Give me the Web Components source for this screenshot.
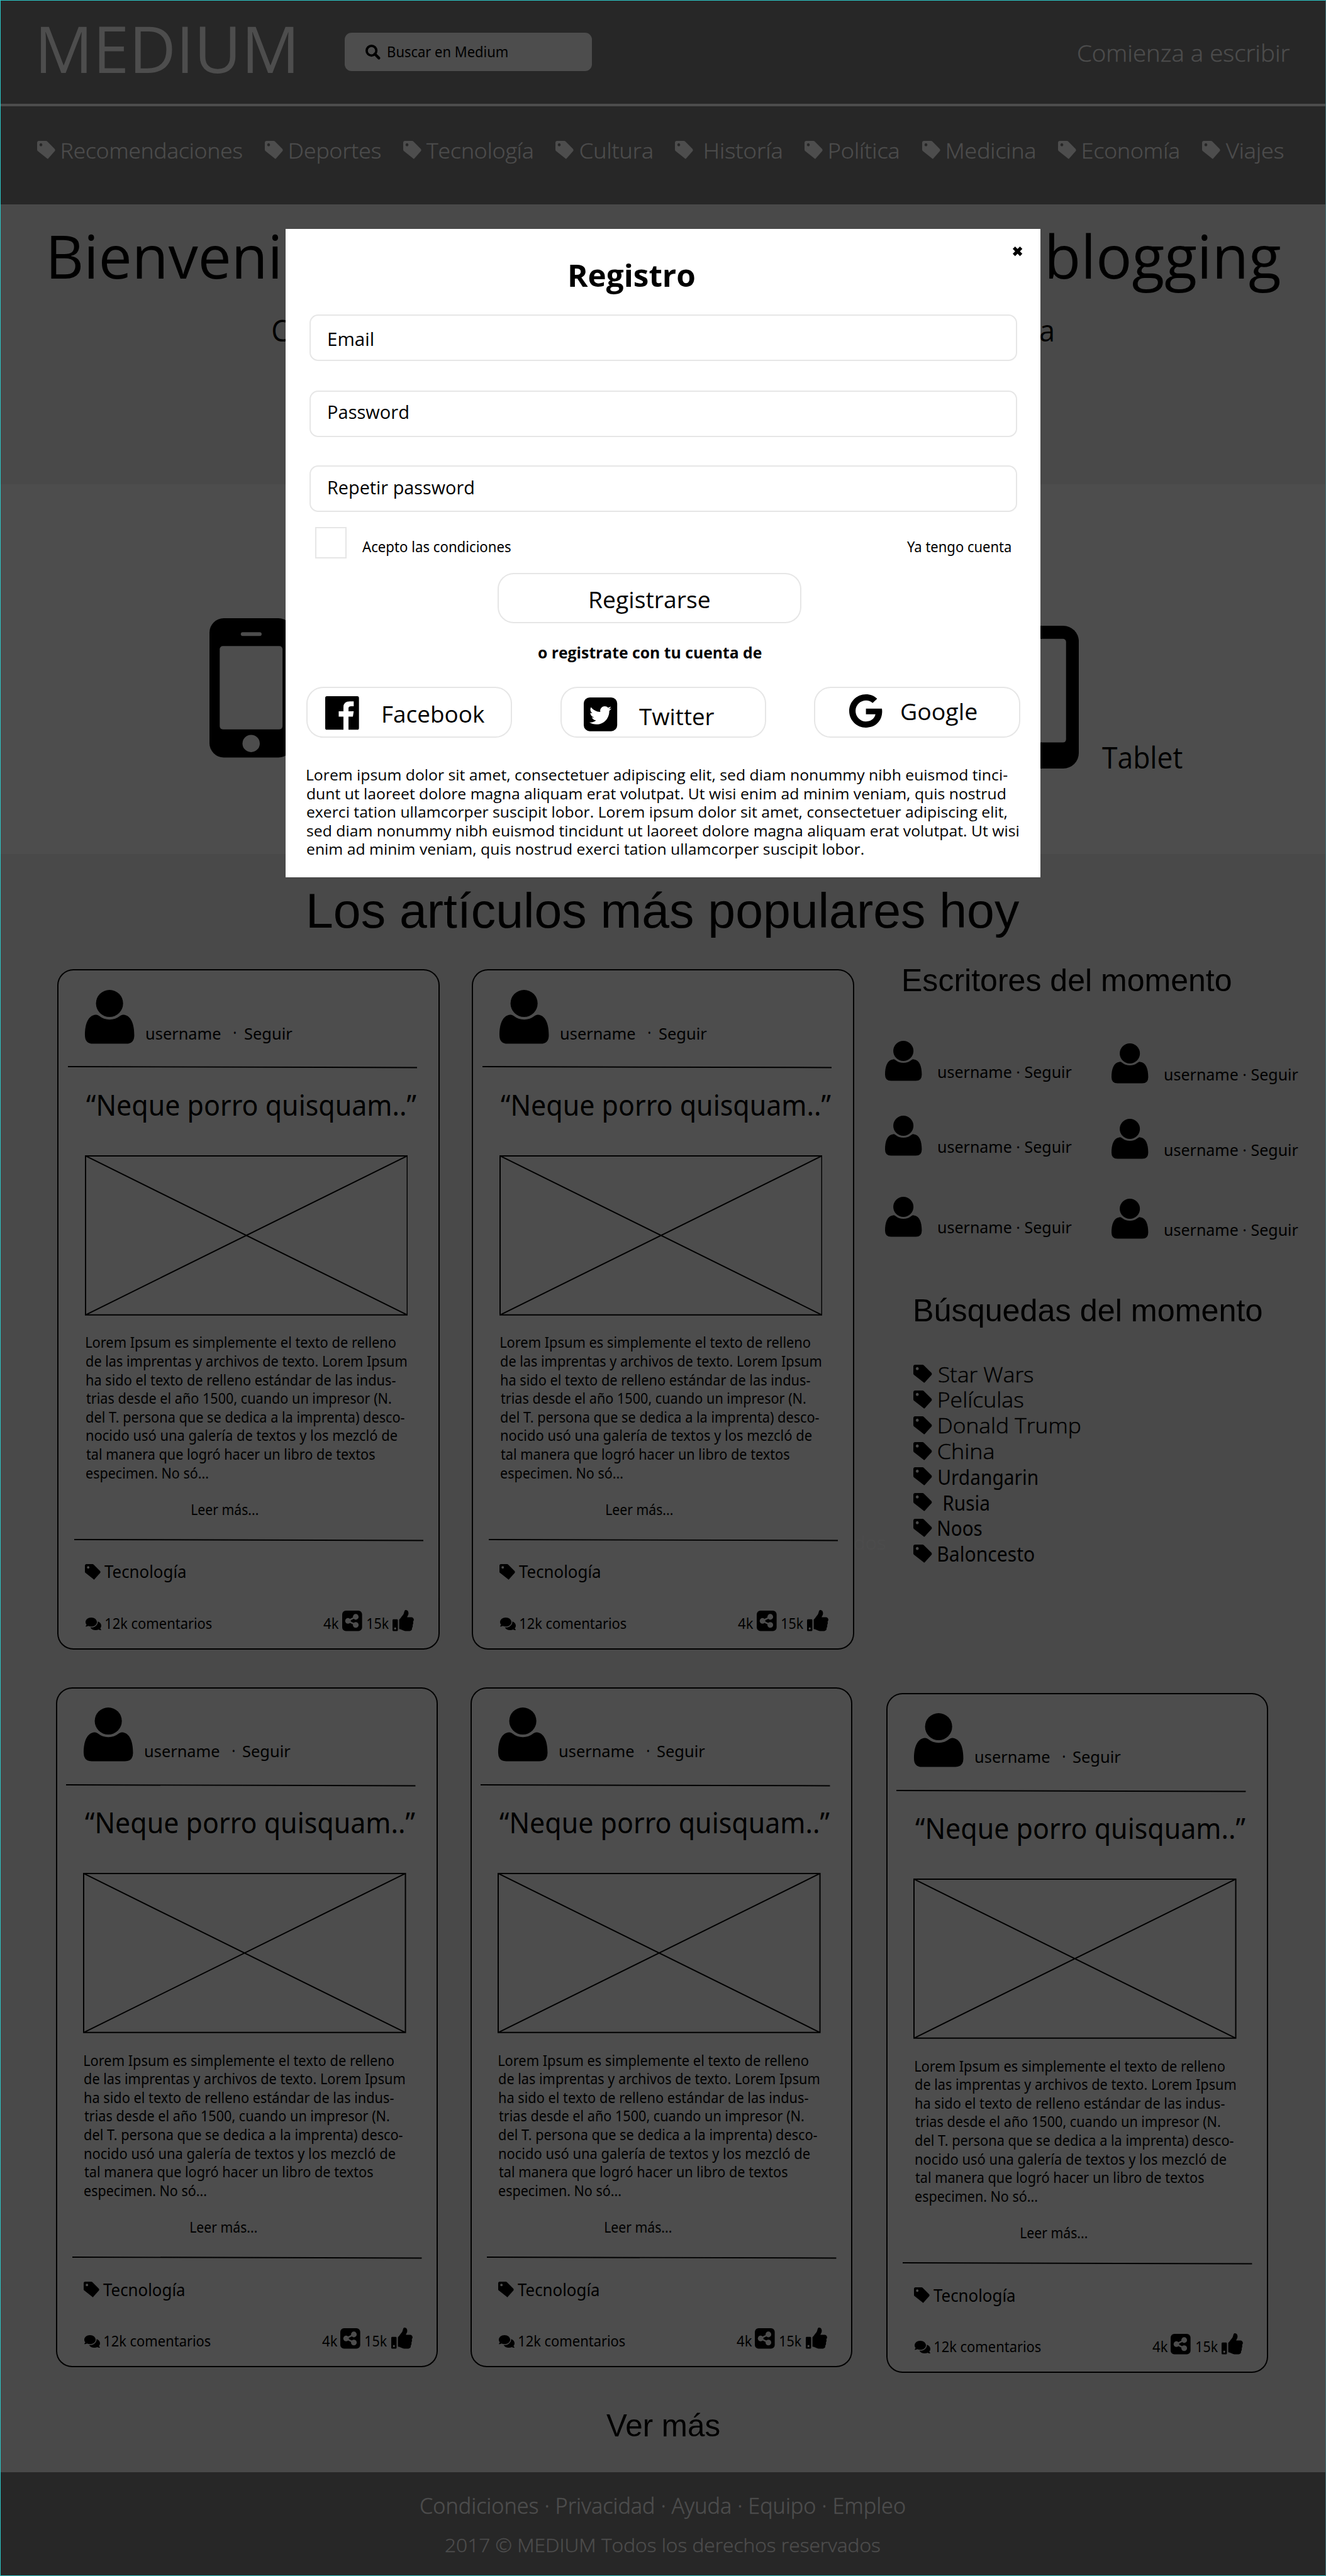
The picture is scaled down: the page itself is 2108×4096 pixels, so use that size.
<!DOCTYPE html>
<html lang="es">
<head>
<meta charset="utf-8">
<title>Medium</title>
<style>
html,body{margin:0;padding:0;background:#494949}
medium-app{zoom:.98835}
</style>
</head>
<body>
<medium-app></medium-app>
<script>
const FONTS = {
  o: '"Open Sans", "Noto Sans", sans-serif',
  n: '"Noto Sans", "Open Sans", sans-serif',
  h: '"Liberation Sans", Arial, sans-serif'
};
const ctx = document.createElement('canvas').getContext('2d');

/* One line of text: s = font size, w = ink width, dy = distance down to the
   baseline, x = left gap, f = font key, b = weight. */
class FitLine extends HTMLElement {
  connectedCallback() {
    if (this.shadowRoot) return;
    const n = k => parseFloat(this.getAttribute(k) || 0);
    const s = n('s'), w = n('w'), cap = s * .714;
    const fam = FONTS[this.getAttribute('f') || 'n'], wt = this.getAttribute('b') || 400;
    const text = this.textContent;
    ctx.font = `${wt} ${s}px ${fam}`;
    const m = ctx.measureText(text);
    const k = w / (m.actualBoundingBoxRight + m.actualBoundingBoxLeft);
    const root = this.attachShadow({mode: 'open'});
    root.innerHTML = `<style>
      :host{display:block;flex:none;width:${w}px;height:${cap}px;margin:${n('dy') - cap}px 0 0 ${n('x')}px}
      span{display:block;width:max-content;white-space:pre;font:${wt} ${s}px/1 ${fam};transform-origin:0 0;
        ${wt < 400 ? '-webkit-text-stroke:.45px currentColor;' : ''}}
      i{display:inline-block;width:0;height:0}
    </style><span><slot></slot><i></i></span>`;
    const box = this.getBoundingClientRect(), probe = root.querySelector('i').getBoundingClientRect();
    const unit = box.width / w || 1;
    const base = (probe.bottom - box.top) / unit;
    root.querySelector('span').style.transform =
      `translate(${m.actualBoundingBoxLeft * k}px,${cap - base + .4}px) scaleX(${k})`;
  }
}
customElements.define('fit-line', FitLine);
const T = (text, s, w, x, dy, f = 'n', b = 400) =>
  `<fit-line s="${s}" w="${w}" x="${x}" dy="${dy}" f="${f}" b="${b}">${text}</fit-line>`;

const ICONS = {
  tag: ['0 0 512 512', '<path d="M0 252.118V48C0 21.49 21.49 0 48 0h204.118a48 48 0 0 1 33.941 14.059l211.882 211.882c18.745 18.745 18.745 49.137 0 67.882L317 500c-10 14-22 14-34 0L14.059 286.059A48 48 0 0 1 0 252.118zM108 68c-22 0-40 18-40 42s18 42 40 42 40-18 40-42-18-42-40-42z"/>'],
  search: ['0 0 24 24', '<circle cx="9.7" cy="9.7" r="7.8" fill="none" stroke="currentColor" stroke-width="3.8"/><path d="M15 15l6.6 6.6" stroke="currentColor" stroke-width="4.4" stroke-linecap="round"/>'],
  close: ['0 0 18 18', '<path d="M3 3l12 12M15 3L3 15" stroke="currentColor" stroke-width="5.6"/>'],
  person: ['0 0 79.4 86.5', '<circle cx="39.6" cy="21.8" r="21.8"/><path d="M17.5 40C5 41 0 55 0 73Q0 86.5 13 86.5H66.4Q79.4 86.5 79.4 73C79.4 55 74.4 41 61.9 40Q59.5 39.7 57 41.5Q49 47.8 39.7 47.8Q30.4 47.8 22.4 41.5Q20 39.7 17.5 40z"/>'],
  comments: ['0 32 576 448', '<path d="M416 192c0-88.4-93.1-160-208-160S0 103.6 0 192c0 34.3 14.1 65.9 38 92-13.4 30.2-35.5 54.2-35.8 54.5-2.2 2.3-2.8 5.7-1.5 8.7S4.8 352 8 352c36.6 0 66.9-12.3 88.7-25 32.2 15.7 70.3 25 111.3 25 114.9 0 208-71.6 208-160zm122 220c23.9-26 38-57.7 38-92 0-66.9-53.5-124.2-129.3-148.1.9 6.6 1.3 13.3 1.3 20.1 0 105.9-107.7 192-240 192-10.8 0-21.3-.8-31.7-1.9C207.8 439.6 281.8 480 368 480c41 0 79.1-9.2 111.3-25 21.8 12.7 52.1 25 88.7 25 3.2 0 6.1-1.9 7.3-4.8 1.3-2.9.7-6.3-1.5-8.7-.3-.3-22.4-24.2-35.8-54.5z"/>'],
  share: ['0 0 32 33', '<rect width="32" height="33" rx="6"/><g fill="#4d4d4d"><circle cx="9.3" cy="16.5" r="4.5"/><circle cx="21.8" cy="10" r="4.6"/><circle cx="21.8" cy="23" r="4.6"/></g><path d="M22 10L9 16.5 22 23" fill="none" stroke="#4d4d4d" stroke-width="2.6"/>'],
  thumb: ['0 0 512 512', '<path d="M104 224H24c-13.255 0-24 10.745-24 24v240c0 13.255 10.745 24 24 24h80c13.255 0 24-10.745 24-24V248c0-13.255-10.745-24-24-24zM64 472c-13.255 0-24-10.745-24-24s10.745-24 24-24 24 10.745 24 24-10.745 24-24 24zM384 81.452c0 42.416-25.97 66.208-33.277 94.548h101.723c33.397 0 59.397 27.746 59.553 58.098.084 17.938-7.546 37.249-19.439 49.197l-.11.11c9.836 23.337 8.237 56.037-9.308 79.469 8.681 25.895-.069 57.704-16.382 74.757 4.298 17.598 2.244 32.575-6.148 44.632C440.202 511.587 389.616 512 346.839 512l-2.845-.001c-48.287-.017-87.806-17.598-119.56-31.725-15.957-7.099-36.821-15.887-52.651-16.178-6.54-.12-11.783-5.457-11.783-11.998v-213.77c0-3.2 1.282-6.271 3.558-8.521 39.614-39.144 56.648-80.587 89.117-113.111 14.804-14.832 20.188-37.236 25.393-58.902C282.515 39.293 291.817 0 312 0c24 0 72 8 72 81.452z"/>'],
  facebook: ['0 0 100 100', '<path fill-rule="evenodd" d="M5 0H95Q100 0 100 5V95Q100 100 95 100H69V61H82L84.5 45H69V36Q69 30 77 30H84.5V15.5H73Q54 15.5 54 33V45H40V61H54V100H5Q0 100 0 95V5Q0 0 5 0z"/>'],
  twitter: ['0 0 100 100', '<rect width="100" height="100" rx="18"/><svg x="17" y="20" width="66" height="66" viewBox="0 0 512 512"><path fill="#fff" d="M459.37 151.716c.325 4.548.325 9.097.325 13.645 0 138.72-105.583 298.558-298.558 298.558-59.452 0-114.68-17.219-161.137-47.106 8.447.974 16.568 1.299 25.34 1.299 49.055 0 94.213-16.568 130.274-44.832-46.132-.975-84.792-31.188-98.112-72.772 6.498.974 12.995 1.624 19.818 1.624 9.421 0 18.843-1.3 27.614-3.573-48.081-9.747-84.143-51.98-84.143-102.985v-1.299c13.969 7.797 30.214 12.67 47.431 13.319-28.264-18.843-46.781-51.005-46.781-87.391 0-19.492 5.197-37.36 14.294-52.954 51.655 63.675 129.3 105.258 216.365 109.807-1.624-7.797-2.599-15.918-2.599-24.04 0-57.828 46.782-104.934 104.934-104.934 30.213 0 57.502 12.67 76.67 33.137 23.715-4.548 46.456-13.32 66.599-25.34-7.798 24.366-24.366 44.833-46.132 57.827 21.117-2.273 41.584-8.122 60.426-16.243-14.292 20.791-32.161 39.308-52.628 54.253z"/></svg>'],
  google: ['0 8 488 496', '<path d="M488 261.8C488 403.3 391.1 504 248 504 110.8 504 0 393.2 0 256S110.8 8 248 8c66.8 0 123 24.5 166.3 64.9l-67.5 64.9C258.5 52.6 94.3 116.6 94.3 256c0 86.5 69.1 156.6 153.7 156.6 98.2 0 135-70.4 140.8-106.9H248v-85.3h236.1c2.3 12.7 3.9 24.9 3.9 41.4z"/>'],
  phone: ['0 0 134 224', '<rect width="134" height="224" rx="23"/><g fill="#4d4d4d"><rect x="50.4" y="22.5" width="33.5" height="6" rx="3"/><rect x="16.5" y="44.8" width="101" height="134" rx="5"/><circle cx="67" cy="201.5" r="13.9"/></g>'],
  tablet: ['0 0 170 229.6', '<rect width="170" height="229.6" rx="25"/><rect x="20.5" y="21" width="129" height="166.8" rx="5" fill="#4d4d4d"/>']
};
class MIcon extends HTMLElement {
  connectedCallback() {
    if (this.shadowRoot) return;
    const [vb, body] = ICONS[this.getAttribute('name')];
    const g = k => this.getAttribute(k) || 0;
    this.attachShadow({mode: 'open'}).innerHTML = `<style>
      :host{display:block;flex:none;width:${g('w')}px;height:${g('h')}px;margin:${g('dy')}px 0 0 ${g('x')}px}
      svg{display:block;overflow:visible}
    </style><svg width="${g('w')}" height="${g('h')}" viewBox="${vb}" preserveAspectRatio="none" fill="currentColor">${body}</svg>`;
  }
}
customElements.define('m-icon', MIcon);
const I = (name, w, h, x, dy) => `<m-icon name="${name}" w="${w}" h="${h}" x="${x}" dy="${dy}"></m-icon>`;

const define = (name, css, html) => customElements.define(name, class extends HTMLElement {
  connectedCallback() {
    if (this.shadowRoot) return;
    this.attachShadow({mode: 'open'}).innerHTML =
      `<style>:host{display:flow-root;box-sizing:border-box}*{box-sizing:border-box}.row{display:flex;align-items:flex-start}${css}</style>${typeof html === 'function' ? html(this) : html}`;
  }
});

define('m-header', `
  :host{background:#272727;color:#4d4d4d;height:171px;border-bottom:5px solid #4d4d4d}
  .search{background:#4d4d4d;color:#000;width:398px;height:61px;border-radius:11px;margin:53px 0 0 81.7px;flex:none}`,
  `<div class="row">${T('MEDIUM', 103.6, 407, 65.3, 116, 'o')}
    <div class="row search">${I('search', 24, 24, 34, 19.3)}${T('Buscar en Medium', 23.3, 192, 12, 39)}</div>
    ${T('Comienza a escribir', 37.3, 340, 782, 98, 'o', 300)}</div>`);

const NAV = [['Recomendaciones', 60, 100.3, 389], ['Deportes', 425.8, 466, 611.4], ['Tecnología', 648.3, 686.5, 856.4],
  ['Cultura', 894, 933.5, 1048], ['Historía', 1086, 1134, 1256.4], ['Política', 1294, 1334.4, 1444.6],
  ['Medicina', 1483, 1524, 1664.2], ['Economía', 1702, 1743, 1896], ['Viajes', 1934, 1972, 2064]];
define('m-nav', `:host{background:#272727;color:#4d4d4d;height:158px}`, () => {
  let end = 0;
  return `<nav class="row">${NAV.map(([t, i, l, r]) => {
    const out = I('tag', 29, 29, i - end, 56) + T(t, 33.2, r - l, l - i - 29, 83, 'o', 300);
    end = r; return out;
  }).join('')}</nav>`;
});

define('m-hero', `:host{background:#494949;height:450px}`,
  `<div class="row">${T('Bienveni', 96, 365.5, 82, 118.7, 'o')}${T('blogging', 96, 372, 1240.5, 118.7, 'o')}</div>
   <div class="row">${T('C', 48, 25.5, 438.5, 101.5, 'o')}${T('a', 48, 20, 1209.5, 101.5, 'o')}</div>`);

define('m-devices', `:host{background:#4d4d4d;height:595.5px}`,
  `<div class="row">${I('phone', 134, 224, 337.3, 215.5)}${I('tablet', 170, 229.6, 1094.1, 227.4)}${T('Tablet', 47.6, 129, 37.6, 456.8, 'o')}</div>`);

const BODY = [['Lorem Ipsum es simplemente el texto de relleno', 498], ['de las imprentas y archivos de texto. Lorem Ipsum', 515.3],
  ['ha sido el texto de relleno estándar de las indus-', 498], ['trias desde el año 1500, cuando un impresor (N.', 490.6],
  ['del T. persona que se dedica a la imprenta) desco-', 512.3], ['nocido usó una galería de textos y los mezcló de', 500],
  ['tal manera que logró hacer un libro de textos', 465], ['especimen. No só...', 196.2]];
const rule = (x, mt) => `<svg style="display:block;margin:${mt}px 0 0 ${x}px" width="562" height="4" viewBox="0 0 562 4"><path d="M0 1L562 2.5" stroke="#000" stroke-width="2"/></svg>`;
define('article-card', `
  :host{flex:none;width:615px;height:1094px;border-radius:26px;background:#4d4d4d;box-shadow:inset 0 0 0 2px #000}
  .head{height:155.8px}.topic{height:70px}
  .pic{display:block;margin:64.3px 0 0 44.3px}`,
  `<div class="row head">${I('person', 79.4, 86.5, 44.8, 32.8)}${T('username', 26, 119.4, 19.6, 112.3)}${T('·', 27, 4.3, 20.6, 112.3)}${T('Seguir', 26, 77, 13.1, 112.3)}</div>
   ${rule(17, 0)}
   ${T('“Neque porro quisquam..”', 46.5, 531.6, 47, 74.8)}
   <svg class="pic" width="519.6" height="257.8" viewBox="0 0 519.6 257.8"><path d="M1 1H518.6V256.8H1zL518.6 256.8M518.6 1L1 256.8" fill="none" stroke="#000" stroke-width="2"/></svg>
   ${BODY.map(([t, w], i) => T(t, 23.3, w, 46.4, i ? 29.97 : 51.7)).join('')}
   ${T('Leer más...', 23.3, 106.5, 217, 59.2)}
   ${rule(27, 38.6)}
   <div class="row topic">${I('tag', 25, 25, 44.8, 36.4)}${T('Tecnología', 28, 130.6, 6.2, 59.2)}</div>
   <div class="row">${I('comments', 25.3, 20.3, 46, 52.9)}${T('12k comentarios', 23.8, 171, 6.7, 71)}${T('4k', 23.8, 25, 179, 71)}${I('share', 32, 33, 5, 41.2)}${T('15k', 23.8, 34.8, 8.8, 71)}${I('thumb', 34.3, 34, 6, 40.7)}</div>`);

define('writer-item', `:host{height:64px}`,
  `<div class="row">${I('person', 59.1, 64.3, 0, 0)}${T('username · Seguir', 25.8, 214.8, 26.9, 58.8)}</div>`);

const SEARCHES = [['Star Wars', 1509.7, 1661.5], ['Películas', 1510.6, 1645.5], ['Donald Trump', 1510.6, 1737.3], ['China', 1509.7, 1597.5],
  ['Urdangarin', 1510, 1669], ['Rusia', 1518.3, 1590], ['Noos', 1510, 1580], ['Baloncesto', 1510, 1664.3]];
define('m-sidebar', `
  :host{flex:none;width:750px;height:1094px}
  .writers{height:399px;padding-left:49.9px}
  .col{display:flex;flex-direction:column;width:300.8px}
  .col+.col{margin-left:63.2px}
  .item{height:41.27px}
  .ghost{color:#4c4c4c}`,
  `${T('Escritores del momento', 50, 526, 80.2, 34.3, 'h')}
   <div class="row writers">
     <div class="col" style="padding-top:81px"><writer-item></writer-item><writer-item style="margin-top:56px"></writer-item><writer-item style="margin-top:66px"></writer-item></div>
     <div class="col" style="padding-top:85px"><writer-item></writer-item><writer-item style="margin-top:57px"></writer-item><writer-item style="margin-top:65px"></writer-item></div>
   </div>
   ${T('Búsquedas del momento', 50, 557.3, 98.5, 132.3, 'h')}
   <div style="padding-top:70.7px">${SEARCHES.map(([t, l, r], i) =>
     `<div class="row item">${I('tag', 29.8, 29, 95, 0)}${i < 4 ? T(t, 33, r - l, l - 1498.6, 26.9, 'o', 300) : T(t, 32.8, r - l, l - 1498.6, 26.9)}</div>`).join('')}</div>
   <div class="ghost">${T('dos', 29, 50.5, 0.7, -34, 'n', 300)}</div>`);

define('m-main', `
  :host{background:#494949;height:2602.5px;display:flex;flex-direction:column}
  .first{margin:66.7px 0 0 92px;flex:none;height:1094px}
  .second{margin:60.7px 0 0 89.6px;flex:none;height:1094px}`,
  `${T('Los artículos más populares hoy', 79.5, 1142, 498, 118.5, 'h')}
   <div class="row first"><article-card></article-card><article-card style="margin-left:51.8px"></article-card><m-sidebar></m-sidebar></div>
   <div class="row second"><article-card></article-card><article-card style="margin-left:51.8px"></article-card><article-card style="margin:9.2px 0 0 53.9px"></article-card></div>
   ${T('Ver más', 50, 182.3, 975, 110.3, 'h')}`);

define('m-footer', `:host{background:#272727;color:#4d4d4d;height:167px}`,
  `${T('Condiciones · Privacidad · Ayuda · Equipo · Empleo', 36, 779, 676.7, 67, 'n', 300)}
   ${T('2017 © MEDIUM Todos los derechos reservados', 30.6, 698.7, 716.8, 61.7, 'o', 300)}`);

const LEGAL = [['Lorem ipsum dolor sit amet, consectetuer adipiscing elit, sed diam nonummy nibh euismod tinci-', 1126.4],
  ['dunt ut laoreet dolore magna aliquam erat volutpat. Ut wisi enim ad minim veniam, quis nostrud', 1123],
  ['exerci tation ullamcorper suscipit lobor. Lorem ipsum dolor sit amet, consectetuer adipiscing elit,', 1125.7],
  ['sed diam nonummy nibh euismod tincidunt ut laoreet dolore magna aliquam erat volutpat. Ut wisi', 1144.9],
  ['enim ad minim veniam, quis nostrud exerci tation ullamcorper suscipit lobor.', 895.2]];
define('register-modal', `
  :host{background:#fff;color:#000;width:1215px;height:1043px}
  .top{height:138px}
  .box{box-shadow:inset 0 0 0 2px #e6e6e6;flex:none}
  .input{width:1138.5px;height:75px;border-radius:14px;margin-left:38.5px}
  .check{width:51px;height:50.5px;margin:23.6px 0 0 48px}
  .terms{height:97.8px}
  .submit{width:488.7px;height:81.4px;border-radius:26px;margin-left:341.3px}
  .socials{padding:46px 0 0 33.4px;gap:77px}
  .social{width:331.7px;height:81.7px;border-radius:27px}`,
  `<div class="row top">${T('Registro', 49, 201, 457.5, 92.8, 'o', 700)}${I('close', 17.5, 17.5, 510.5, 28)}</div>
   <div class="box input row">${T('Email', 29.4, 71.5, 30.5, 50.3, 'o')}</div>
   <div class="box input row" style="margin-top:47px">${T('Password', 29.4, 128.5, 30.5, 46, 'o')}</div>
   <div class="box input row" style="margin-top:46px">${T('Repetir password', 29.4, 233.6, 30.5, 46, 'o')}</div>
   <div class="row terms"><div class="box check"></div>${T('Acepto las condiciones', 24, 239, 24.6, 64.5)}${T('Ya tengo cuenta', 24, 167, 637.5, 64.5)}</div>
   <div class="box submit row">${T('Registrarse', 37.5, 193, 148.7, 56.4, 'o')}</div>
   ${T('o registrate con tu cuenta de', 24.8, 359, 407, 55.8, 'o', 700)}
   <div class="row socials">
     <div class="box social row">${I('facebook', 54.3, 54, 31, 14.7)}${T('Facebook', 36.8, 164, 38.3, 58, 'o')}</div>
     <div class="box social row">${I('twitter', 53.8, 54.3, 37.8, 17.5)}${T('Twitter', 36.8, 121, 35.4, 61.4, 'o')}</div>
     <div class="box social row">${I('google', 53, 53.6, 56, 12)}${T('Google', 36.8, 121, 31, 53.3, 'o')}</div>
   </div>
   ${LEGAL.map(([t, w], i) => T(t, 24.2, w, 34.3, i ? 29.95 : 69.2, 'o')).join('')}`);

define('medium-app', `
  :host{position:relative;width:2133px;height:4144px;overflow:hidden;color:#000}
  register-modal{position:absolute;left:459px;top:368px}
  .guides{position:absolute;inset:0;border:1.02px solid #2cc9c9;border-right-color:#3d6f73;pointer-events:none}`,
  `<m-header></m-header><m-nav></m-nav><m-hero></m-hero><m-devices></m-devices><m-main></m-main><m-footer></m-footer>
   <register-modal></register-modal><div class="guides"></div>`);
</script>
</body>
</html>
